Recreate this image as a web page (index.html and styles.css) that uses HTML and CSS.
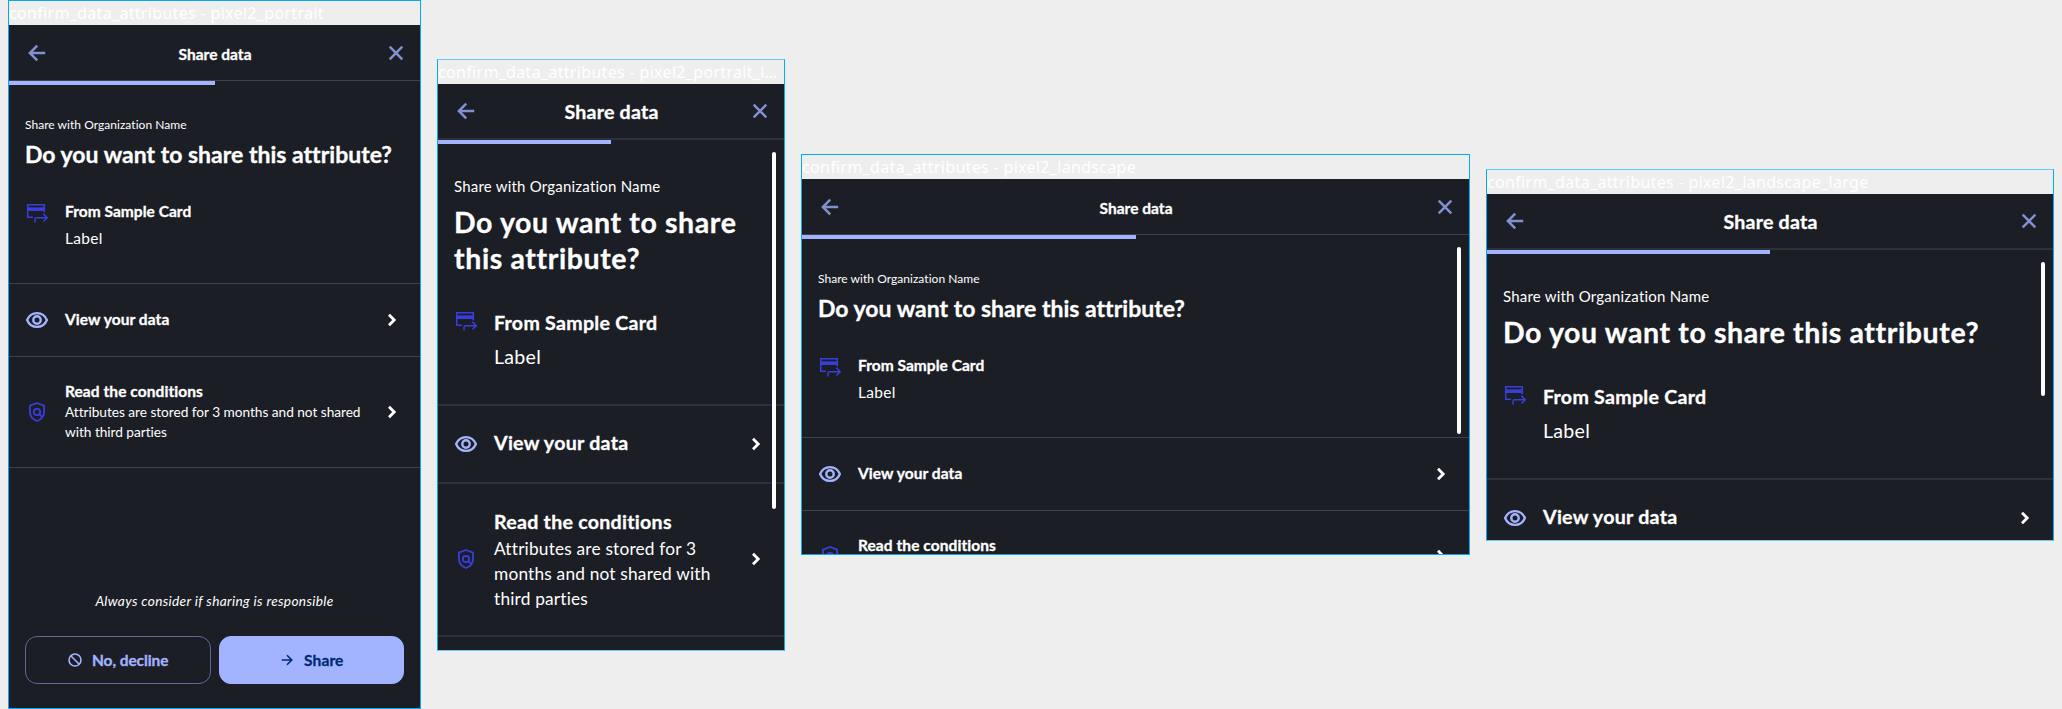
FILE: index.html
```html
<!DOCTYPE html>
<html lang="en">
<head>
<meta charset="utf-8">
<title>confirm_data_attributes</title>
<link rel="stylesheet" href="styles.css">
</head>
<body>
<svg class="sprite" aria-hidden="true">
  <symbol id="back" viewBox="0 0 24 24"><path d="M20.200 12H5M12.200 4.700L4.900 12l7.300 7.300" fill="none" stroke="currentColor" stroke-width="2.500"/></symbol>
  <symbol id="close" viewBox="0 0 24 24"><path d="M5.700 5.700l12.600 12.600M18.300 5.700L5.700 18.300" fill="none" stroke="currentColor" stroke-width="2.500"/></symbol>
  <symbol id="card" viewBox="0 0 24 24"><path d="M19.300 11.200V3.700H2.700v12.600H8M10 21.600v-3.300q0-1.600 1.600-1.600h10.600M18.400 12.900l3.800 3.800-3.800 3.800" fill="none" stroke="currentColor" stroke-width="1.500"/><path d="M2.700 6.400h16.600V10H2.700z" fill="currentColor"/></symbol>
  <symbol id="eye" viewBox="0 0 24 24"><path d="M2.100 12C3.800 7.900 7.600 5.100 12 5.100s8.200 2.800 9.900 6.900C20.200 16.100 16.400 18.900 12 18.900S3.800 16.100 2.100 12z" fill="none" stroke="currentColor" stroke-width="2.300"/><circle cx="12" cy="12" r="3.700" fill="none" stroke="currentColor" stroke-width="2.400"/></symbol>
  <symbol id="shield" viewBox="0 0 24 24"><path d="M12 3L4.900 5.700v5.600c0 4.500 3 8.300 7.100 9.700 4.100-1.400 7.100-5.200 7.100-9.700V5.700z" fill="none" stroke="currentColor" stroke-width="1.800" stroke-linejoin="round"/><circle cx="12" cy="12" r="3.200" fill="none" stroke="currentColor" stroke-width="1.800"/><path d="M14.200 14.200l3 3" stroke="currentColor" stroke-width="1.800"/></symbol>
  <symbol id="chevron" viewBox="0 0 24 24"><path d="M9 6.800l5.200 5.200L9 17.200" fill="none" stroke="currentColor" stroke-width="2.800"/></symbol>
  <symbol id="block" viewBox="0 0 16 16"><circle cx="8" cy="8" r="6" fill="none" stroke="currentColor" stroke-width="1.600"/><path d="M3.800 3.800l8.400 8.400" stroke="currentColor" stroke-width="1.600"/></symbol>
  <symbol id="forward" viewBox="0 0 16 16"><path d="M2.700 8h10M8 3.200L12.800 8 8 12.800" fill="none" stroke="currentColor" stroke-width="1.600"/></symbol>
</svg>

<main class="board">
  <section class="frame portrait">
    <div class="frame-label">confirm_data_attributes - pixel2_portrait</div>
    <div class="screen">
      <header class="bar"><svg class="icon"><use href="#back"/></svg><h1 class="bar-title">Share data</h1><svg class="icon"><use href="#close"/></svg><div class="progress"></div></header>
      <div class="intro">
        <p class="org">Share with Organization Name</p>
        <h2 class="question">Do you want to share this attribute?</h2>
        <div class="attribute"><svg class="icon"><use href="#card"/></svg><div><p class="name">From Sample Card</p><p class="value">Label</p></div></div>
      </div>
      <div class="row"><svg class="icon light"><use href="#eye"/></svg><p class="row-title">View your data</p><svg class="icon chevron"><use href="#chevron"/></svg></div>
      <div class="row conditions"><svg class="icon"><use href="#shield"/></svg><div class="row-text"><p class="row-title">Read the conditions</p><p class="row-desc">Attributes are stored for 3 months and not shared with third parties</p></div><svg class="icon chevron"><use href="#chevron"/></svg></div>
      <footer class="actions">
        <p class="hint">Always consider if sharing is responsible</p>
        <div class="buttons">
          <button class="button"><svg class="glyph"><use href="#block"/></svg><span>No, decline</span></button>
          <button class="button primary"><svg class="glyph"><use href="#forward"/></svg><span>Share</span></button>
        </div>
      </footer>
    </div>
  </section>

  <section class="frame portrait-large large">
    <div class="frame-label">confirm_data_attributes - pixel2_portrait_large</div>
    <div class="screen">
      <header class="bar"><svg class="icon"><use href="#back"/></svg><h1 class="bar-title">Share data</h1><svg class="icon"><use href="#close"/></svg><div class="progress"></div></header>
      <div class="intro">
        <p class="org">Share with Organization Name</p>
        <h2 class="question">Do you want to share this attribute?</h2>
        <div class="attribute"><svg class="icon"><use href="#card"/></svg><div><p class="name">From Sample Card</p><p class="value">Label</p></div></div>
      </div>
      <div class="row"><svg class="icon light"><use href="#eye"/></svg><p class="row-title">View your data</p><svg class="icon chevron"><use href="#chevron"/></svg></div>
      <div class="row conditions"><svg class="icon"><use href="#shield"/></svg><div class="row-text"><p class="row-title">Read the conditions</p><p class="row-desc">Attributes are stored for 3 months and not shared with third parties</p></div><svg class="icon chevron"><use href="#chevron"/></svg></div>
    </div>
    <div class="scrollbar"></div>
  </section>

  <section class="frame landscape">
    <div class="frame-label">confirm_data_attributes - pixel2_landscape</div>
    <div class="screen">
      <header class="bar"><svg class="icon"><use href="#back"/></svg><h1 class="bar-title">Share data</h1><svg class="icon"><use href="#close"/></svg><div class="progress"></div></header>
      <div class="intro">
        <p class="org">Share with Organization Name</p>
        <h2 class="question">Do you want to share this attribute?</h2>
        <div class="attribute"><svg class="icon"><use href="#card"/></svg><div><p class="name">From Sample Card</p><p class="value">Label</p></div></div>
      </div>
      <div class="row"><svg class="icon light"><use href="#eye"/></svg><p class="row-title">View your data</p><svg class="icon chevron"><use href="#chevron"/></svg></div>
      <div class="row conditions"><svg class="icon"><use href="#shield"/></svg><div class="row-text"><p class="row-title">Read the conditions</p></div><svg class="icon chevron"><use href="#chevron"/></svg></div>
    </div>
    <div class="scrollbar"></div>
  </section>

  <section class="frame landscape-large large">
    <div class="frame-label">confirm_data_attributes - pixel2_landscape_large</div>
    <div class="screen">
      <header class="bar"><svg class="icon"><use href="#back"/></svg><h1 class="bar-title">Share data</h1><svg class="icon"><use href="#close"/></svg><div class="progress"></div></header>
      <div class="intro">
        <p class="org">Share with Organization Name</p>
        <h2 class="question">Do you want to share this attribute?</h2>
        <div class="attribute"><svg class="icon"><use href="#card"/></svg><div><p class="name">From Sample Card</p><p class="value">Label</p></div></div>
      </div>
      <div class="row"><svg class="icon light"><use href="#eye"/></svg><p class="row-title">View your data</p><svg class="icon chevron"><use href="#chevron"/></svg></div>
    </div>
    <div class="scrollbar"></div>
  </section>
</main>
</body>
</html>
```
FILE: styles.css
```css
* { box-sizing: border-box; margin: 0; padding: 0; }

body {
  background: #eee;
  color: #fff;
  font-family: Lato, "Open Sans", sans-serif;
}

.sprite { display: none; }

.board {
  display: flex;
  align-items: center;
  gap: 16px;
  height: 709px;
  padding: 0 8px;
  overflow: hidden;
}

.frame {
  --rule: 1px solid #404249;
  position: relative;
  display: flex;
  flex-direction: column;
  flex: none;
  border: 1px solid #03a9f4;
  overflow: hidden;
}
.portrait { width: 413px; height: 709px; }
.portrait-large { width: 348px; height: 592px; }
.landscape { width: 669px; height: 401px; }
.landscape-large { width: 568px; height: 372px; }

.frame-label {
  flex: none;
  height: 24px;
  font: 16px/24px "Noto Sans", sans-serif;
  letter-spacing: 0.32px;
  white-space: nowrap;
  overflow: hidden;
  text-overflow: ellipsis;
}

.screen {
  flex: 1;
  display: flex;
  flex-direction: column;
  min-height: 0;
  background: #1c1e25;
  overflow: hidden;
}
.screen > * { flex: none; }

.icon { flex: none; width: 24px; height: 24px; color: #383ede; }
.light { color: #a2b3ff; }

.bar {
  position: relative;
  display: flex;
  align-items: center;
  justify-content: space-between;
  height: 56px;
  padding: 0 12px 0 16px;
  border-bottom: var(--rule);
}
.bar .icon { color: #8191d0; }
.bar-title { margin: 2px 3px 0 0; font-size: 15.5px; line-height: 24px; letter-spacing: 0.03px; }
.bar-title, .question, .name, .row-title, .button span { -webkit-text-stroke: 0.3px currentColor; }
.progress {
  position: absolute;
  left: 0;
  top: 100%;
  margin-top: 1px;
  width: 50%;
  height: 4px;
  background: #a2b3ff;
}

.intro { padding: 36px 16px 31px; border-bottom: var(--rule); }
.org { font-size: 12px; line-height: 16px; letter-spacing: 0.04px; }
.question { margin-top: 7px; font-size: 23px; line-height: 28px; letter-spacing: 0.01px; }
.attribute { display: flex; gap: 16px; margin-top: 30px; }
.attribute .icon { margin-top: 3px; }
.name, .value { font-size: 15.5px; line-height: 27px; letter-spacing: 0.03px; }
.name { font-weight: 700; }
.value { letter-spacing: 0.3px; }

.row {
  display: flex;
  align-items: center;
  gap: 16px;
  height: 73px;
  padding: 0 16px;
  border-bottom: var(--rule);
}
.row .chevron { margin-left: auto; color: #fff; }
.row > .row-title { padding-bottom: 2px; }
.row-text { flex: 1; min-width: 0; padding-bottom: 2px; }
.row-title { font-size: 15.5px; line-height: 21px; font-weight: 700; letter-spacing: 0.07px; }
.row-desc { font-size: 13.7px; line-height: 20px; letter-spacing: -0.04px; }
.conditions { height: 111px; }

/* The conditions row is cut by the bottom edge of the landscape screen */
.landscape .conditions { height: 91px; }
.landscape .row-text { height: 43px; }

.actions { margin-top: auto; padding: 0 16px 24px; }
.hint {
  margin-bottom: 25px;
  text-align: center;
  font-size: 13.7px;
  line-height: 20px;
  font-style: italic;
  letter-spacing: 0.33px;
}
.buttons { display: grid; grid-template-columns: 1fr 1fr; gap: 8px; }
.button {
  display: flex;
  align-items: center;
  justify-content: center;
  gap: 9px;
  height: 48px;
  border: 1px solid #5e689b;
  border-radius: 12px;
  background: none;
  color: #a2b3ff;
  font: 700 15.5px/20px Lato, sans-serif;
  letter-spacing: -0.08px;
}
.button span { padding-bottom: 1px; }
.primary { border-color: #a2b3ff; background: #a2b3ff; color: #002b70; letter-spacing: 0.1px; }
.glyph { width: 16px; height: 16px; }

.scrollbar {
  position: absolute;
  right: 8px;
  top: 92px;
  width: 4px;
  border-radius: 2px;
  background: #fff;
}
.portrait-large .scrollbar { height: 357px; }
.landscape .scrollbar { height: 187px; }
.landscape-large .scrollbar { height: 134px; }

/* Larger text scale */
.large { --rule: 2px solid #2f3138; border-top-color: #6cc9f5; border-bottom-color: #6cc9f5; }
.large .bar-title { font-size: 19.6px; letter-spacing: 0.22px; }
.large .progress { margin-top: 2px; }
.large .intro { padding: 36px 16px 30px; }
.large .org { font-size: 15px; line-height: 20px; letter-spacing: 0.21px; }
.large .question { margin-top: 8px; font-size: 28.5px; line-height: 36px; letter-spacing: 0.61px; }
.large .attribute { margin-top: 30px; }
.large .name, .large .value { font-size: 19.6px; line-height: 34px; letter-spacing: 0.27px; }
.large .row { height: 78px; }
.large .row-title { font-size: 19.6px; line-height: 29px; letter-spacing: 0.27px; }
.large .row-text { padding-bottom: 0; }
.large .row-desc { font-size: 17.3px; line-height: 25px; letter-spacing: 0.19px; }
.large .conditions { height: 153px; }
```
